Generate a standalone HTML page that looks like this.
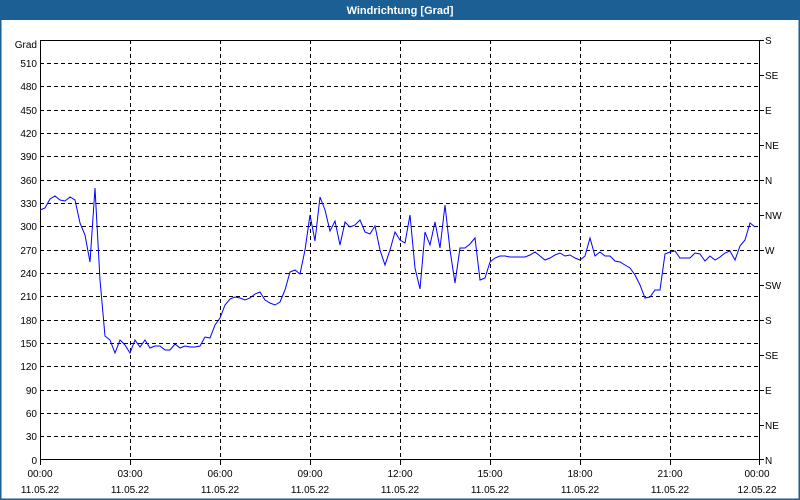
<!DOCTYPE html>
<html><head><meta charset="utf-8"><style>
html,body{margin:0;padding:0;width:800px;height:500px;overflow:hidden;background:#fff;font-family:"Liberation Sans",sans-serif}
</style></head><body>
<svg width="800" height="500" xmlns="http://www.w3.org/2000/svg" font-family="Liberation Sans, sans-serif" font-size="10">
<rect x="0" y="0" width="800" height="500" fill="#fff"/>
<rect x="0.5" y="0.5" width="799" height="499" fill="none" stroke="#1c5f94" stroke-width="2"/>
<rect x="0" y="0" width="800" height="20" fill="#1c5f94"/>
<text x="400" y="14" fill="#fff" font-weight="bold" font-size="11" text-anchor="middle">Windrichtung [Grad]</text>
<g stroke="#000" stroke-dasharray="4,3" stroke-width="1">
<line x1="40" x2="760" y1="63.5" y2="63.5"/><line x1="40" x2="760" y1="86.5" y2="86.5"/><line x1="40" x2="760" y1="110.5" y2="110.5"/><line x1="40" x2="760" y1="133.5" y2="133.5"/><line x1="40" x2="760" y1="156.5" y2="156.5"/><line x1="40" x2="760" y1="180.5" y2="180.5"/><line x1="40" x2="760" y1="203.5" y2="203.5"/><line x1="40" x2="760" y1="226.5" y2="226.5"/><line x1="40" x2="760" y1="250.5" y2="250.5"/><line x1="40" x2="760" y1="273.5" y2="273.5"/><line x1="40" x2="760" y1="296.5" y2="296.5"/><line x1="40" x2="760" y1="320.5" y2="320.5"/><line x1="40" x2="760" y1="343.5" y2="343.5"/><line x1="40" x2="760" y1="366.5" y2="366.5"/><line x1="40" x2="760" y1="390.5" y2="390.5"/><line x1="40" x2="760" y1="413.5" y2="413.5"/><line x1="40" x2="760" y1="436.5" y2="436.5"/>
<line y1="40" y2="460" x1="130.5" x2="130.5"/><line y1="40" y2="460" x1="220.5" x2="220.5"/><line y1="40" y2="460" x1="310.5" x2="310.5"/><line y1="40" y2="460" x1="400.5" x2="400.5"/><line y1="40" y2="460" x1="490.5" x2="490.5"/><line y1="40" y2="460" x1="580.5" x2="580.5"/><line y1="40" y2="460" x1="670.5" x2="670.5"/>
</g>
<rect x="40.5" y="40.5" width="719" height="419" fill="none" stroke="#000"/>
<g stroke="#000">
<line x1="40.5" x2="40.5" y1="460" y2="465"/><line x1="130.5" x2="130.5" y1="460" y2="465"/><line x1="220.5" x2="220.5" y1="460" y2="465"/><line x1="310.5" x2="310.5" y1="460" y2="465"/><line x1="400.5" x2="400.5" y1="460" y2="465"/><line x1="490.5" x2="490.5" y1="460" y2="465"/><line x1="580.5" x2="580.5" y1="460" y2="465"/><line x1="670.5" x2="670.5" y1="460" y2="465"/><line x1="759.5" x2="759.5" y1="460" y2="465"/>
<line x1="760" x2="764" y1="40.5" y2="40.5"/><line x1="760" x2="764" y1="75.5" y2="75.5"/><line x1="760" x2="764" y1="110.5" y2="110.5"/><line x1="760" x2="764" y1="145.5" y2="145.5"/><line x1="760" x2="764" y1="180.5" y2="180.5"/><line x1="760" x2="764" y1="215.5" y2="215.5"/><line x1="760" x2="764" y1="250.5" y2="250.5"/><line x1="760" x2="764" y1="285.5" y2="285.5"/><line x1="760" x2="764" y1="320.5" y2="320.5"/><line x1="760" x2="764" y1="355.5" y2="355.5"/><line x1="760" x2="764" y1="390.5" y2="390.5"/><line x1="760" x2="764" y1="425.5" y2="425.5"/><line x1="760" x2="764" y1="459.5" y2="459.5"/>
</g>
<g text-anchor="end" fill="#000">
<text x="37" y="48">Grad</text>
<text x="37" y="67">510</text><text x="37" y="90">480</text><text x="37" y="114">450</text><text x="37" y="137">420</text><text x="37" y="160">390</text><text x="37" y="184">360</text><text x="37" y="207">330</text><text x="37" y="230">300</text><text x="37" y="254">270</text><text x="37" y="277">240</text><text x="37" y="300">210</text><text x="37" y="324">180</text><text x="37" y="347">150</text><text x="37" y="370">120</text><text x="37" y="394">90</text><text x="37" y="417">60</text><text x="37" y="440">30</text><text x="37" y="464">0</text>
</g>
<g fill="#000">
<text x="765" y="44">S</text><text x="765" y="79">SE</text><text x="765" y="114">E</text><text x="765" y="149">NE</text><text x="765" y="184">N</text><text x="765" y="219">NW</text><text x="765" y="254">W</text><text x="765" y="289">SW</text><text x="765" y="324">S</text><text x="765" y="359">SE</text><text x="765" y="394">E</text><text x="765" y="429">NE</text><text x="765" y="464">N</text>
</g>
<g text-anchor="middle" fill="#000">
<text x="40" y="477">00:00</text><text x="40" y="493">11.05.22</text>
<text x="130" y="477">03:00</text><text x="130" y="493">11.05.22</text>
<text x="220" y="477">06:00</text><text x="220" y="493">11.05.22</text>
<text x="310" y="477">09:00</text><text x="310" y="493">11.05.22</text>
<text x="400" y="477">12:00</text><text x="400" y="493">11.05.22</text>
<text x="490" y="477">15:00</text><text x="490" y="493">11.05.22</text>
<text x="580" y="477">18:00</text><text x="580" y="493">11.05.22</text>
<text x="670" y="477">21:00</text><text x="670" y="493">11.05.22</text>
<text x="757" y="477">00:00</text><text x="757" y="493">12.05.22</text>
</g>
<polyline fill="none" stroke="#0000ff" stroke-width="1" points="40,210 45,208 50,199 55,196 60,200 65,201 70,197 75,200 80,223 85,235 90,262 95,188 100,280 105,336 110,340 115,353 120,340 125,345 130,353 135,340 140,347 145,340 150,348 155,346 160,346 165,350 170,350 175,344 180,348 185,346 190,347 195,347 200,346 205,337 210,338 215,325 220,318 225,305 230,299 235,297 240,298 245,300 250,298 255,294 260,292 265,300 270,303 275,305 280,302 285,290 290,272 295,270 300,274 305,250 310,215 315,241 320,197 325,210 330,231 335,221 340,245 345,222 350,227 355,225 360,220 365,232 370,234 375,226 380,250 385,265 390,250 395,232 400,240 405,243 410,215 415,268 420,289 425,232 430,245 435,222 440,248 445,205 450,250 455,283 460,248 465,248 470,244 475,238 480,280 485,278 490,262 495,258 500,256 505,256 510,257 515,257 520,257 525,257 530,255 535,252 540,256 545,260 550,258 555,255 560,253 565,256 570,255 575,258 580,260 585,256 590,238 595,256 600,252 605,256 610,256 615,261 620,262 625,265 630,268 635,275 640,285 645,298 650,297 655,290 660,290 665,254 670,252 675,251 680,258 685,258 690,258 695,253 700,254 705,261 710,256 715,260 720,257 725,253 730,251 735,260 740,246 745,240 750,223 755,227"/>
</svg>
</body></html>
